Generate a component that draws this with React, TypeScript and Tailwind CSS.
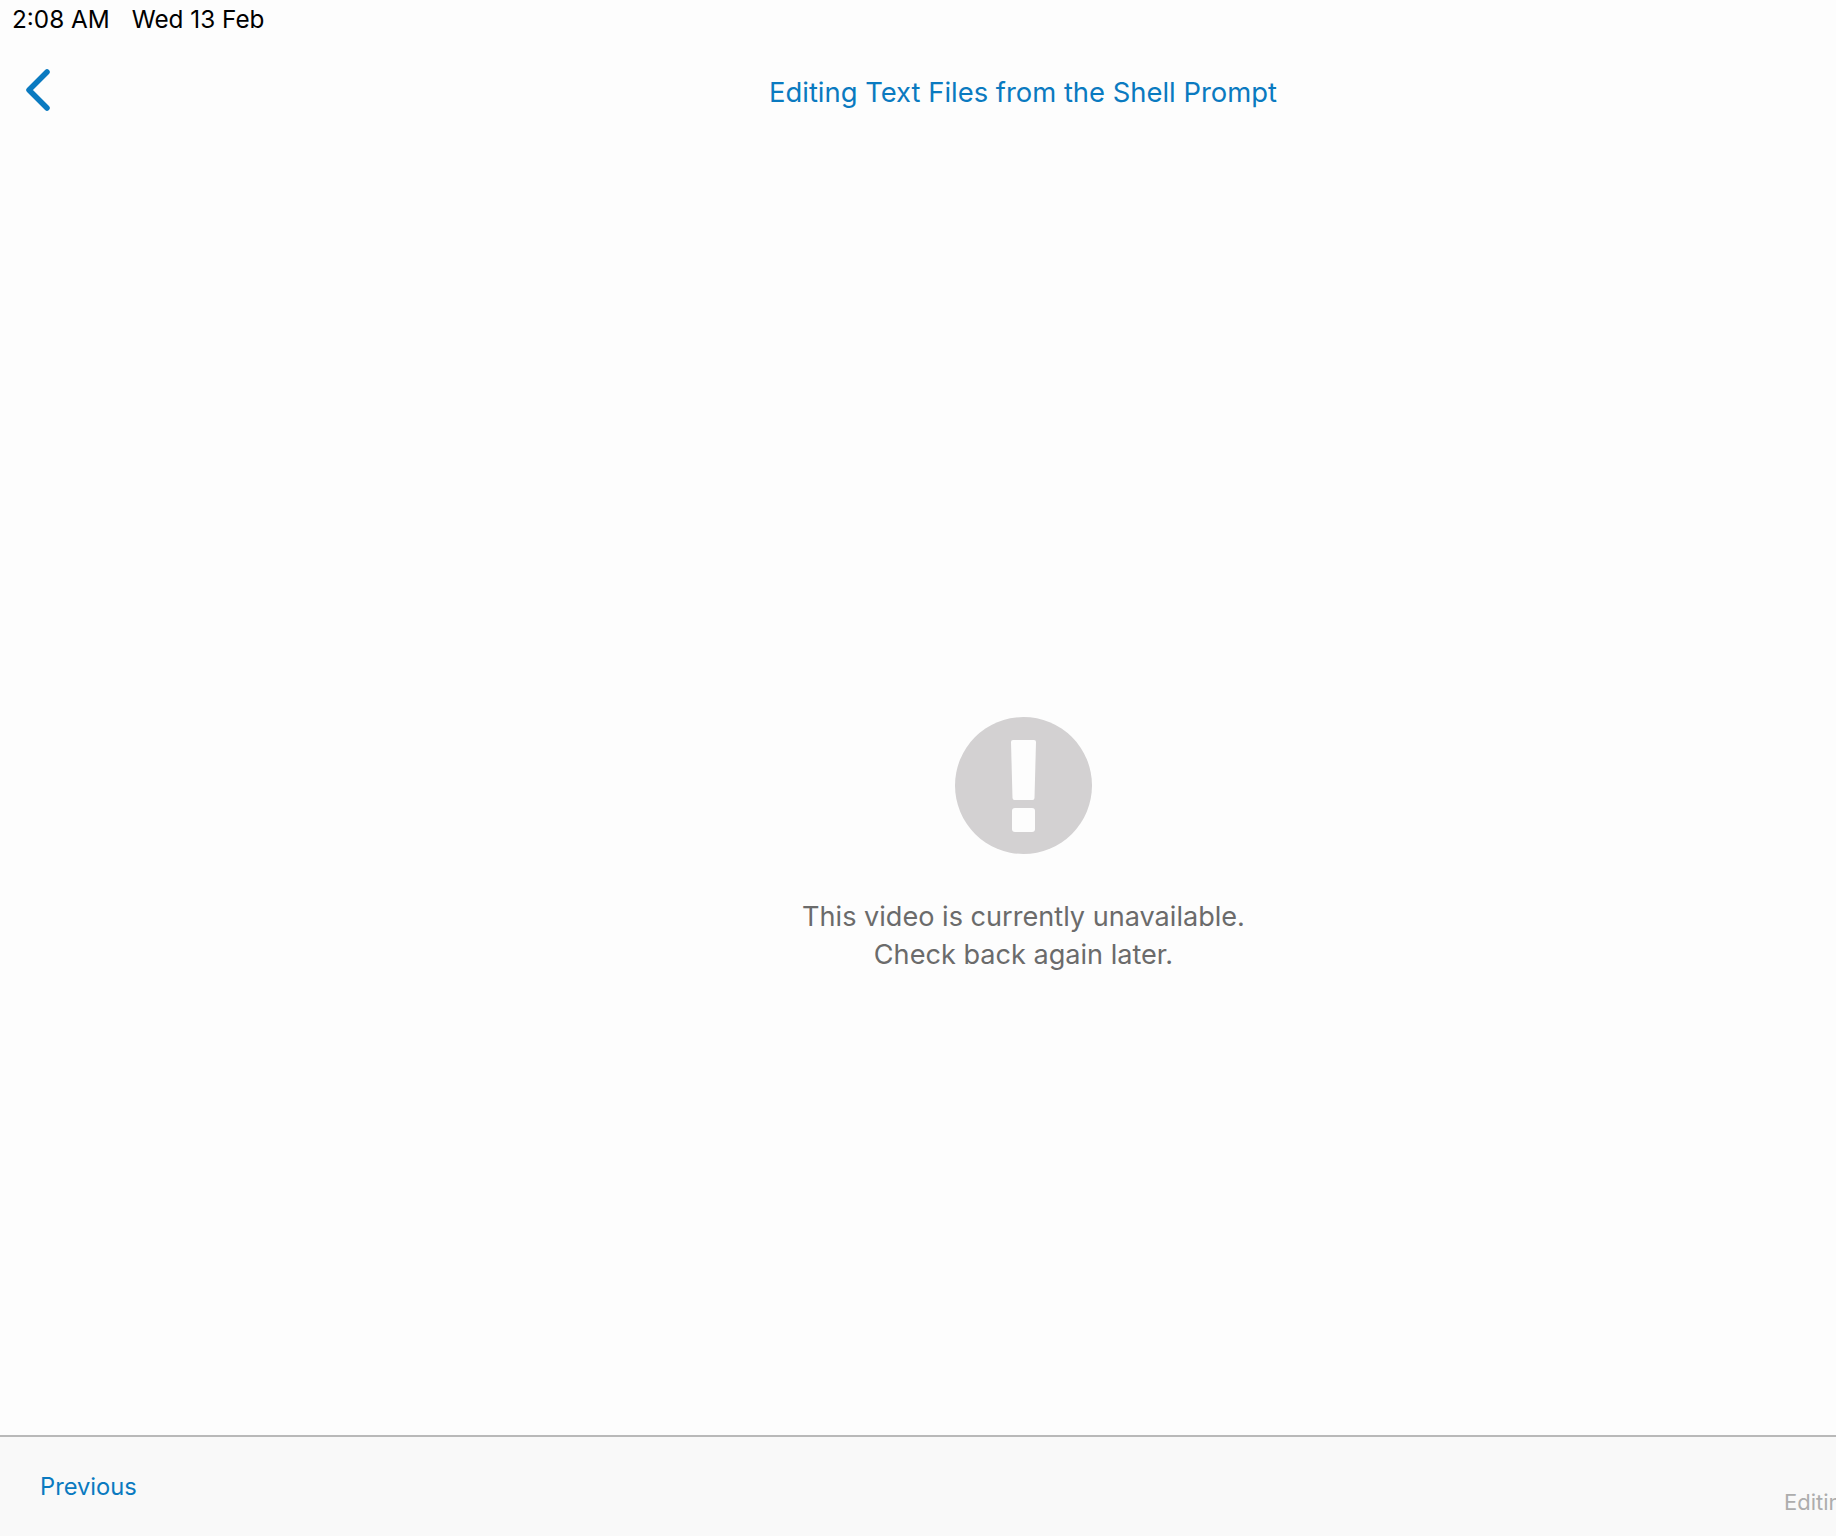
function BackChevron() {
  return (
    <svg width="32" height="48" viewBox="0 0 32 48" fill="none">
      <path
        d="M25 6 L7 24 L25 42"
        stroke="#0a7ac0"
        strokeWidth="5.5"
        strokeLinecap="round"
        strokeLinejoin="round"
      />
    </svg>
  )
}

function AlertIcon() {
  return (
    <svg width="137" height="137" viewBox="0 0 137 137">
      <circle cx="68.5" cy="68.5" r="68.5" fill="#d3d1d2" />
      <path
        d="M56 25 Q56 23 58 23 H79 Q81 23 81 25 L79.500 81 Q79.500 83 77.500 83 H59.500 Q57.500 83 57.500 81 Z"
        fill="#fdfdfd"
      />
      <rect x="57" y="91" width="23" height="24" rx="3" fill="#fdfdfd" />
    </svg>
  )
}

export default function App() {
  return (
    <div className="h-[1536px] w-[1836px] overflow-hidden flex flex-col bg-[#fdfdfd] font-['Inter',sans-serif]">
      {/* Status bar */}
      <div className="h-10 pl-3 pt-[3px] flex gap-[22px] text-[24.3px] leading-[32px] text-black">
        <span>2:08 AM</span>
        <span>Wed 13 Feb</span>
      </div>

      {/* Header */}
      <div className="h-20 flex">
        <div className="w-[210px] pl-[22px] pt-[26px]">
          <BackChevron />
        </div>
        <div className="flex-1 pt-[34px] text-center text-[27.4px] leading-[36px] text-[#0a7ac0]">
          Editing Text Files from the Shell Prompt
        </div>
      </div>

      {/* Unavailable message */}
      <div className="flex-1 flex">
        <div className="w-[210px]" />
        <div className="flex-1 flex flex-col items-center pt-[597px]">
          <AlertIcon />
          <p className="mt-11 pl-[1px] text-center text-[27.1px] leading-[38px] text-[#6b6b6b]">
            This video is currently unavailable.
            <br />
            Check back again later.
          </p>
        </div>
      </div>

      {/* Footer */}
      <div className="h-[101px] border-t-2 border-[#b9b9b9] bg-[#f9f9f9] flex justify-between overflow-hidden">
        <span className="pl-10 pt-[34px] text-[23.700px] leading-[32px] text-[#0a7ac0]">Previous</span>
        <span className="w-[52px] pt-[50px] text-[22px] leading-[30px] text-[#adadad] whitespace-nowrap">
          Editing Text Files
        </span>
      </div>
    </div>
  )
}
